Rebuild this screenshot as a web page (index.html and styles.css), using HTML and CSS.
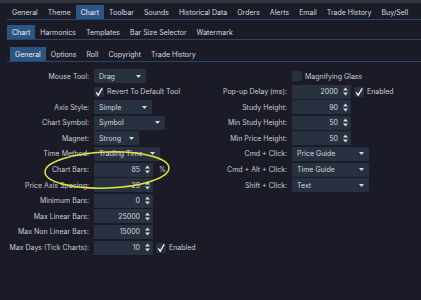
FILE: index.html
```html
<!DOCTYPE html>
<html lang="en">
<head>
    <meta charset="UTF-8">
    <title>Preferences - Chart</title>
    <link rel="stylesheet" href="styles.css">
</head>
<body>

<div class="window">
    <div class="top-strip"></div>

    <!-- Main preference tabs -->
    <nav class="tabs tabs-main">
        <span class="tab">General</span>
        <span class="tab">Theme</span>
        <span class="tab active">Chart</span>
        <span class="tab">Toolbar</span>
        <span class="tab">Sounds</span>
        <span class="tab">Historical Data</span>
        <span class="tab">Orders</span>
        <span class="tab">Alerts</span>
        <span class="tab">Email</span>
        <span class="tab">Trade History</span>
        <span class="tab">Buy/Sell</span>
    </nav>

    <nav class="tabs tabs-sub">
        <span class="tab active">Chart</span>
        <span class="tab">Harmonics</span>
        <span class="tab">Templates</span>
        <span class="tab">Bar Size Selector</span>
        <span class="tab">Watermark</span>
    </nav>

    <nav class="tabs tabs-third">
        <span class="tab active">General</span>
        <span class="tab">Options</span>
        <span class="tab">Roll</span>
        <span class="tab">Copyright</span>
        <span class="tab">Trade History</span>
    </nav>

    <div class="form">
        <!-- Left column -->
        <div class="grid grid-left">
            <label>Mouse Tool:</label>
            <div class="combo w52"><span>Drag</span><svg class="arrow" viewBox="0 0 5 3"><path d="M0 0H5L2.5 3Z"/></svg></div>

            <span></span>
            <div class="check-row">
                <span class="check"><svg viewBox="0 0 10 10"><path d="M2.2 5.4L4.2 8.2L8.2 1.4"/></svg></span>
                <span>Revert To Default Tool</span>
            </div>

            <label>Axis Style:</label>
            <div class="combo w58"><span>Simple</span><svg class="arrow" viewBox="0 0 5 3"><path d="M0 0H5L2.5 3Z"/></svg></div>

            <label>Chart Symbol:</label>
            <div class="combo w71"><span>Symbol</span><svg class="arrow" viewBox="0 0 5 3"><path d="M0 0H5L2.5 3Z"/></svg></div>

            <label>Magnet:</label>
            <div class="combo w45"><span>Strong</span><svg class="arrow" viewBox="0 0 5 3"><path d="M0 0H5L2.5 3Z"/></svg></div>

            <label>Time Method:</label>
            <div class="combo w66"><span>Trading Time</span><svg class="arrow" viewBox="0 0 5 3"><path d="M0 0H5L2.5 3Z"/></svg></div>

            <label>Chart Bars:</label>
            <div class="check-row">
                <div class="spin"><span>85</span><svg class="spin-arrows" viewBox="0 0 5 9"><path d="M0 3.6L2.5 0.6L5 3.6ZM0 5.4H5L2.5 8.4Z"/></svg></div>
                <span class="suffix">%</span>
            </div>

            <label>Price Axis Spacing:</label>
            <div class="spin"><span>25</span><svg class="spin-arrows" viewBox="0 0 5 9"><path d="M0 3.6L2.5 0.6L5 3.6ZM0 5.4H5L2.5 8.4Z"/></svg></div>

            <label>Minimum Bars:</label>
            <div class="spin"><span>0</span><svg class="spin-arrows" viewBox="0 0 5 9"><path d="M0 3.6L2.5 0.6L5 3.6ZM0 5.4H5L2.5 8.4Z"/></svg></div>

            <label>Max Linear Bars:</label>
            <div class="spin"><span>25000</span><svg class="spin-arrows" viewBox="0 0 5 9"><path d="M0 3.6L2.5 0.6L5 3.6ZM0 5.4H5L2.5 8.4Z"/></svg></div>

            <label>Max Non Linear Bars:</label>
            <div class="spin"><span>15000</span><svg class="spin-arrows" viewBox="0 0 5 9"><path d="M0 3.6L2.5 0.6L5 3.6ZM0 5.4H5L2.5 8.4Z"/></svg></div>

            <label>Max Days (Tick Charts):</label>
            <div class="check-row">
                <div class="spin"><span>10</span><svg class="spin-arrows" viewBox="0 0 5 9"><path d="M0 3.6L2.5 0.6L5 3.6ZM0 5.4H5L2.5 8.4Z"/></svg></div>
                <span class="check"><svg viewBox="0 0 10 10"><path d="M2.2 5.4L4.2 8.2L8.2 1.4"/></svg></span>
                <span>Enabled</span>
            </div>
        </div>

        <!-- Right column -->
        <div class="grid grid-right">
            <span></span>
            <div class="check-row">
                <span class="check"></span>
                <span>Magnifying Glass</span>
            </div>

            <label>Pop-up Delay (ms):</label>
            <div class="check-row">
                <div class="spin"><span>2000</span><svg class="spin-arrows" viewBox="0 0 5 9"><path d="M0 3.6L2.5 0.6L5 3.6ZM0 5.4H5L2.5 8.4Z"/></svg></div>
                <span class="check"><svg viewBox="0 0 10 10"><path d="M2.2 5.4L4.2 8.2L8.2 1.4"/></svg></span>
                <span>Enabled</span>
            </div>

            <label>Study Height:</label>
            <div class="spin"><span>90</span><svg class="spin-arrows" viewBox="0 0 5 9"><path d="M0 3.6L2.5 0.6L5 3.6ZM0 5.4H5L2.5 8.4Z"/></svg></div>

            <label>Min Study Height:</label>
            <div class="spin"><span>50</span><svg class="spin-arrows" viewBox="0 0 5 9"><path d="M0 3.6L2.5 0.6L5 3.6ZM0 5.4H5L2.5 8.4Z"/></svg></div>

            <label>Min Price Height:</label>
            <div class="spin"><span>50</span><svg class="spin-arrows" viewBox="0 0 5 9"><path d="M0 3.6L2.5 0.6L5 3.6ZM0 5.4H5L2.5 8.4Z"/></svg></div>

            <label>Cmd + Click:</label>
            <div class="combo w77"><span>Price Guide</span><svg class="arrow" viewBox="0 0 5 3"><path d="M0 0H5L2.5 3Z"/></svg></div>

            <label>Cmd + Alt + Click:</label>
            <div class="combo w77"><span>Time Guide</span><svg class="arrow" viewBox="0 0 5 3"><path d="M0 0H5L2.5 3Z"/></svg></div>

            <label>Shift + Click:</label>
            <div class="combo w77"><span>Text</span><svg class="arrow" viewBox="0 0 5 3"><path d="M0 0H5L2.5 3Z"/></svg></div>
        </div>
    </div>

    <!-- Hand-drawn highlight around Chart Bars -->
    <svg class="highlight" width="421" height="300" viewBox="0 0 421 300">
        <ellipse cx="107" cy="170" rx="62" ry="18" transform="rotate(-2 107 170)"/>
    </svg>
</div>

</body>
</html>
```

FILE: styles.css
```css
body, html {
    margin: 0;
    padding: 0;
    background-color: #1a1b26;
    font-family: Inter, "Noto Sans", sans-serif;
    font-size: 7px;
    color: #c9cdd4;
    overflow: hidden;
}

.window {
    position: relative;
    width: 421px;
    height: 300px;
}

.top-strip {
    height: 3px;
    background-color: #34363d;
}

/* Tab bars */
.tabs {
    display: flex;
    height: 14px;
    margin-left: 7px;
    border-bottom: 1px solid #294669;
}

.tabs-main { margin-top: 2px; }
.tabs-sub { margin-top: 5px; }
.tabs-third { margin-top: 7px; padding-left: 3px; }

.tab {
    display: flex;
    align-items: center;
    padding: 0 5px;
    color: #d6dae1;
    white-space: nowrap;
}

.tab.active {
    background-color: #2d5583;
    color: #eef1f5;
}

/* Form grids */
.form {
    display: flex;
    margin-top: 7px;
}

.grid {
    display: grid;
    grid-auto-rows: 14px;
    row-gap: 1.6px;
    column-gap: 5px;
    align-items: center;
}

.grid-left {
    width: 215px;
    grid-template-columns: 89px auto;
}

.grid-right {
    grid-template-columns: 72px auto;
    align-content: start;
}

.grid label {
    text-align: right;
    white-space: nowrap;
}

/* Inputs */
.combo, .spin {
    display: flex;
    align-items: center;
    height: 14px;
    box-sizing: border-box;
    background-color: #28313f;
    border-radius: 1px;
    color: #d4d8de;
}

.combo {
    justify-content: space-between;
    padding: 0 5px;
}

.combo .arrow {
    width: 5px;
    height: 3px;
    fill: #d4d8de;
}

.w45 { width: 45px; }
.w52 { width: 52px; }
.w58 { width: 58px; }
.w66 { width: 66px; }
.w71 { width: 71px; }
.w77 { width: 77px; }

.spin {
    width: 59px;
    justify-content: flex-end;
    padding-right: 3px;
}

.spin span {
    margin-right: 5px;
}

.spin-arrows {
    width: 5px;
    height: 9px;
    fill: #d4d8de;
}

.check-row {
    display: flex;
    align-items: center;
    gap: 3px;
    white-space: nowrap;
}

.check {
    display: flex;
    width: 10px;
    height: 10px;
    background-color: #28313f;
    border-radius: 2px;
}

.check svg {
    width: 10px;
    height: 10px;
    fill: none;
    stroke: #f2f4f7;
    stroke-width: 1.3;
}

.suffix {
    margin-left: 3px;
}

.highlight {
    position: absolute;
    left: 0;
    top: 0;
    pointer-events: none;
}

.highlight ellipse {
    fill: none;
    stroke: #e4e43c;
    stroke-width: 1.5;
}
```
